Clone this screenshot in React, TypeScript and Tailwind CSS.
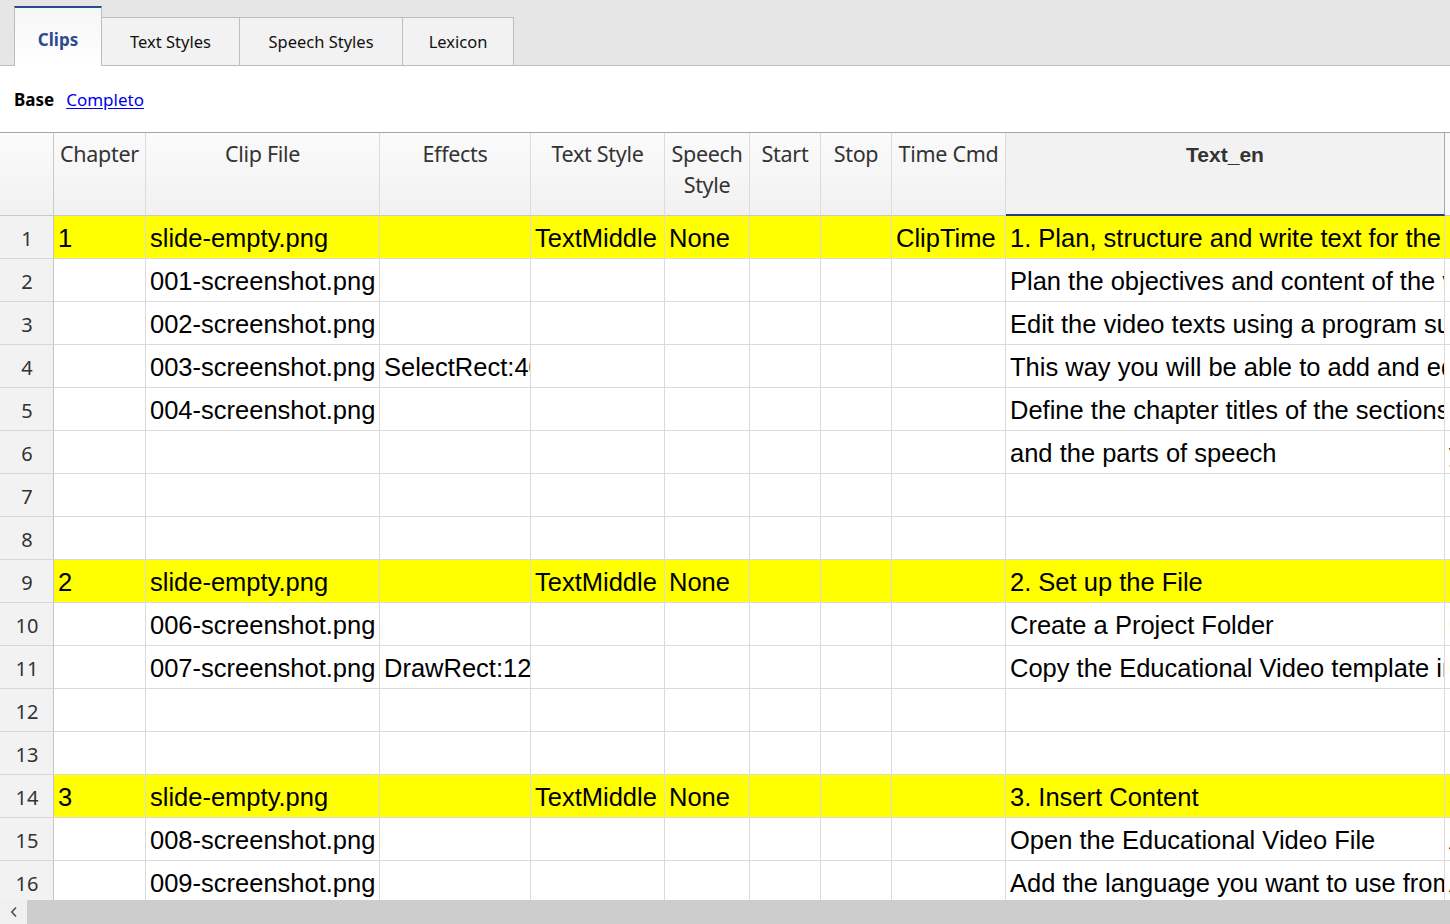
import React from 'react';

type Row = {
  hl?: boolean;
  chapter?: string;
  clip?: string;
  effects?: string;
  textStyle?: string;
  speech?: string;
  start?: string;
  stop?: string;
  timeCmd?: string;
  text?: string;
  textEs?: string;
};

const rows: Row[] = [
  { hl: true, chapter: '1', clip: 'slide-empty.png', textStyle: 'TextMiddle', speech: 'None', timeCmd: 'ClipTime', text: '1. Plan, structure and write text for the video', textEs: '1. Planificar, estructurar y escribir' },
  { clip: '001-screenshot.png', text: 'Plan the objectives and content of the video', textEs: 'Planifique los objetivos' },
  { clip: '002-screenshot.png', text: 'Edit the video texts using a program such as Excel', textEs: 'Edite los textos del video' },
  { clip: '003-screenshot.png', effects: 'SelectRect:40,120,300,80', text: 'This way you will be able to add and edit texts', textEs: 'De esta manera podrá' },
  { clip: '004-screenshot.png', text: 'Define the chapter titles of the sections', textEs: 'Defina los títulos' },
  { text: 'and the parts of speech', textEs: 'y las partes' },
  {},
  {},
  { hl: true, chapter: '2', clip: 'slide-empty.png', textStyle: 'TextMiddle', speech: 'None', text: '2. Set up the File', textEs: '2. Configurar el archivo' },
  { clip: '006-screenshot.png', text: 'Create a Project Folder', textEs: 'Crear una carpeta' },
  { clip: '007-screenshot.png', effects: 'DrawRect:120,200,400,60', text: 'Copy the Educational Video template into the folder', textEs: 'Copie la plantilla' },
  {},
  {},
  { hl: true, chapter: '3', clip: 'slide-empty.png', textStyle: 'TextMiddle', speech: 'None', text: '3. Insert Content', textEs: '3. Insertar contenido' },
  { clip: '008-screenshot.png', text: 'Open the Educational Video File', textEs: 'Abra el archivo' },
  { clip: '009-screenshot.png', text: 'Add the language you want to use from the list', textEs: 'Agregue el idioma' },
];

const headers = ['Chapter', 'Clip File', 'Effects', 'Text Style', 'Speech Style', 'Start', 'Stop', 'Time Cmd'];

const sans = "font-['Noto_Sans','Open_Sans',sans-serif]";
const arial = "font-['Liberation_Sans',Arial,sans-serif]";

const Cell: React.FC<{ children?: React.ReactNode; hl?: boolean }> = ({ children, hl }) => (
  <div
    className={`h-[43px] border-r border-b border-[#dadada] pl-[4px] pt-[3px] flex items-center overflow-hidden whitespace-nowrap text-[25.5px] text-black ${arial} ${hl ? 'bg-[#ffff00]' : 'bg-white'}`}
  >
    {children}
  </div>
);

export default function App() {
  return (
    <div className="w-[1450px] h-[924px] flex flex-col overflow-hidden bg-white">
      {/* tabs */}
      <div className={`h-[66px] shrink-0 flex items-end pl-[14px] bg-[#e6e6e6] border-b border-[#bdbdbd] ${sans}`}>
        <div className="w-[88px] h-[60px] -mb-px bg-linear-to-b from-[#f6f6f6] to-white border-t-2 border-t-[#2d4a8e] border-x border-x-[#bdbdbd] flex justify-center pt-[19px] text-[17px] font-bold text-[#2d4a8e]">
          Clips
        </div>
        <div className="w-[138px] h-[48px] bg-[#f2f2f2] border-t border-r border-[#bdbdbd] flex items-center justify-center pt-[2px] text-[16.5px] text-[#111]">
          Text Styles
        </div>
        <div className="w-[163px] h-[48px] bg-[#f2f2f2] border-t border-r border-[#bdbdbd] flex items-center justify-center pt-[2px] text-[16.5px] text-[#111]">
          Speech Styles
        </div>
        <div className="w-[111px] h-[48px] bg-[#f2f2f2] border-t border-r border-[#bdbdbd] flex items-center justify-center pt-[2px] text-[16.5px] text-[#111]">
          Lexicon
        </div>
      </div>

      {/* view switch */}
      <div className={`h-[66px] shrink-0 flex items-center gap-[12px] pl-[14px] pt-[1px] text-[17px] ${sans}`}>
        <span className="font-bold text-black">Base</span>
        <a className="text-[#0000ee] underline underline-offset-2 cursor-pointer">Completo</a>
      </div>

      {/* grid */}
      <div className="flex-1 overflow-hidden border-t border-[#a6a6a6]">
        <div className="grid w-max grid-cols-[54px_92px_234px_151px_134px_85px_71px_71px_114px_439px_300px]">
          <div className="h-[83px] bg-linear-to-b from-[#fbfbfb] to-[#f1f1f1] border-r border-b border-[#c9c9c9]" />
          {headers.map((h) => (
            <div
              key={h}
              className={`h-[83px] bg-linear-to-b from-[#fbfbfb] to-[#f1f1f1] border-r border-b border-r-[#dcdcdc] border-b-[#c9c9c9] pt-[5px] text-center text-[21.5px] leading-[31px] tracking-[-0.3px] text-[#333] whitespace-pre-line ${sans}`}
            >
              {h === 'Speech Style' ? 'Speech\nStyle' : h}
            </div>
          ))}
          <div className={`h-[83px] bg-[#f2f2f2] border-r border-r-[#a9a9a9] border-b-2 border-b-[#2b3f7d] pt-[6px] text-center text-[21px] leading-[31px] font-bold text-[#333] ${arial}`}>
            Text_en
          </div>
          <div className="h-[83px] bg-[#f9f9f9] border-b border-[#c9c9c9]" />

          {rows.map((r, i) => (
            <React.Fragment key={i}>
              <div className={`h-[43px] bg-[#f2f2f2] border-r border-b border-r-[#c4c4c4] border-b-[#d6d6d6] flex items-center justify-center pt-[3px] pl-[1px] text-[20px] text-[#333] ${sans}`}>
                {i + 1}
              </div>
              <Cell hl={r.hl}>{r.chapter}</Cell>
              <Cell hl={r.hl}>{r.clip}</Cell>
              <Cell hl={r.hl}>{r.effects}</Cell>
              <Cell hl={r.hl}>{r.textStyle}</Cell>
              <Cell hl={r.hl}>{r.speech}</Cell>
              <Cell hl={r.hl}>{r.start}</Cell>
              <Cell hl={r.hl}>{r.stop}</Cell>
              <Cell hl={r.hl}>{r.timeCmd}</Cell>
              <Cell hl={r.hl}>{r.text}</Cell>
              <Cell hl={r.hl}>{r.textEs}</Cell>
            </React.Fragment>
          ))}
        </div>
      </div>

      {/* horizontal scrollbar */}
      <div className="h-[24px] shrink-0 flex bg-[#cdcdcd]">
        <div className="w-[27px] h-full bg-[#f0f0f0] flex items-center justify-center">
          <svg width="8" height="12" viewBox="0 0 8 12" fill="none" stroke="#505050" strokeWidth="1.6">
            <path d="M6 1.5 L1.8 6 L6 10.5" />
          </svg>
        </div>
      </div>
    </div>
  );
}
